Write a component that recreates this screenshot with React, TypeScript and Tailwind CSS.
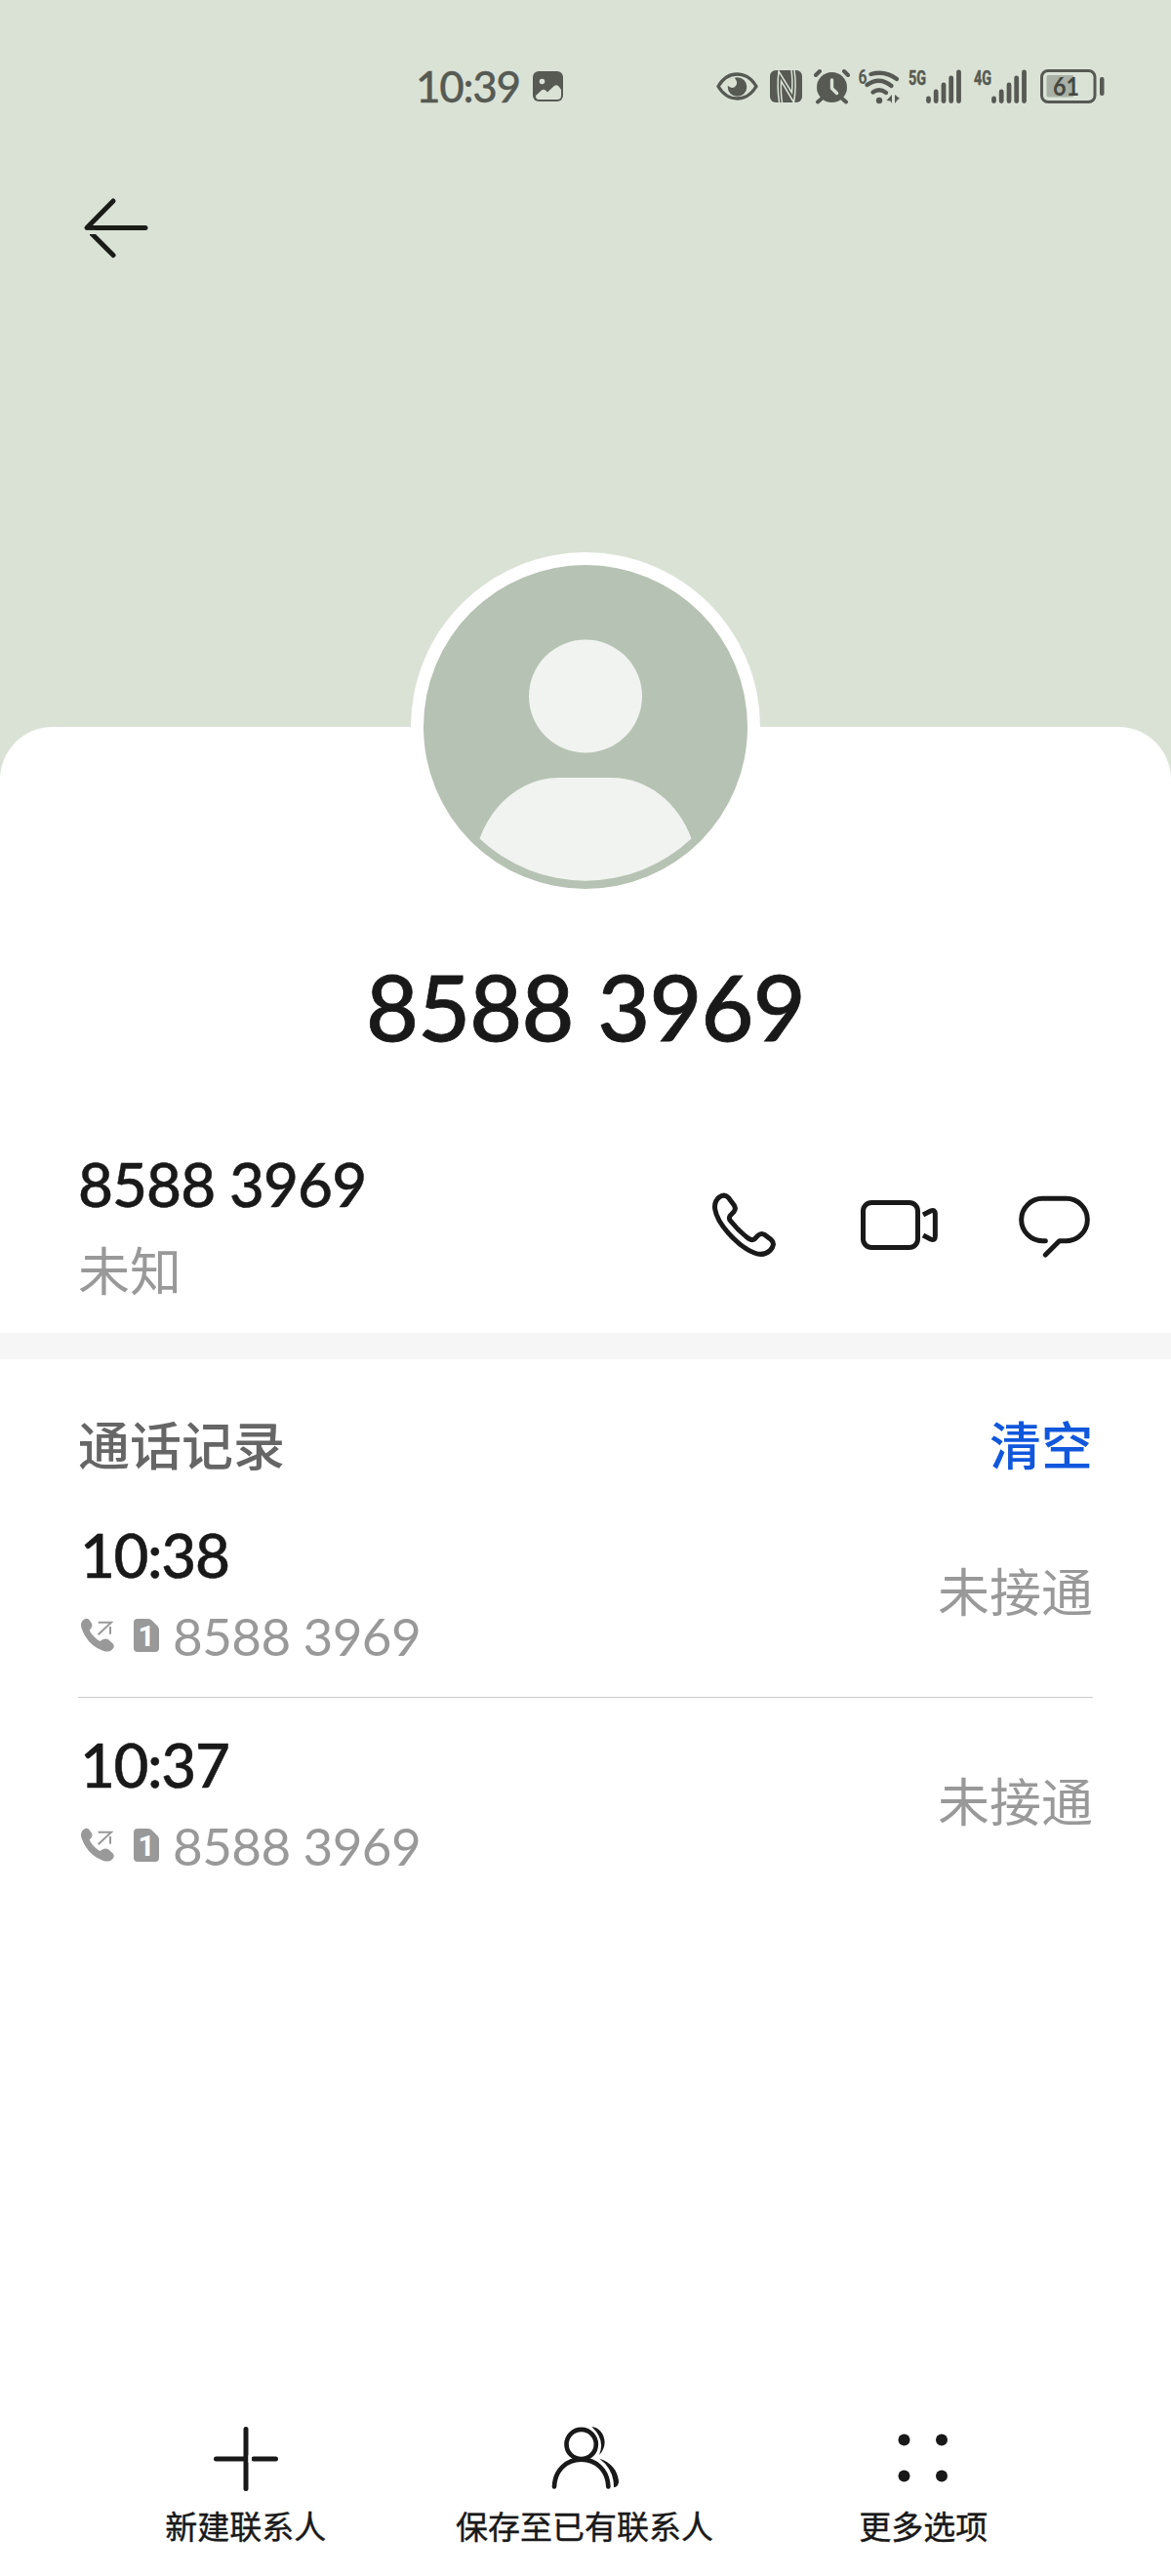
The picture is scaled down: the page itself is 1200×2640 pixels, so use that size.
import React from "react";

interface CallLog {
  time: string;
  number: string;
  status: string;
}

const callLogs: CallLog[] = [
  { time: "10:38", number: "8588 3969", status: "未接通" },
  { time: "10:37", number: "8588 3969", status: "未接通" },
];

function StatusBar() {
  return (
    <div className="flex h-[38px] items-start pl-[426px] text-[#565a53]">
      <span className="w-[120px] font-['Lato'] text-[44px] leading-[37px] tracking-[-1.3px] font-medium [-webkit-text-stroke:0.3px]">
        10:39
      </span>
      <svg className="w-[31px] h-[38px]" viewBox="0 0 31 38">
        <rect y="3" width="31" height="31" rx="6" fill="currentColor" />
        <circle cx="9.500" cy="13.500" r="2.800" fill="#dae2d6" />
        <path
          d="M3 28l6-5.500q2-1.500 4 0l2 2 7-6.500q3-2 5 1l2 3v6q0 4-4 4H6q-3 0-3-4z"
          fill="#dae2d6"
        />
      </svg>

      {/* eye comfort */}
      <svg className="ml-[157px] w-[43px] h-[38px]" viewBox="0 0 43 38">
        <path
          d="M2 18.500Q9.500 6 21.500 6T41 18.500Q33.500 31 21.500 31T2 18.500z"
          fill="none"
          stroke="currentColor"
          strokeWidth="3.400"
          strokeLinejoin="round"
        />
        <circle cx="21.500" cy="19" r="9.800" fill="currentColor" />
        <path d="M12 14l6-5q5 5 2 9t-8 0z" fill="#dae2d6" />
      </svg>

      {/* NFC */}
      <svg className="ml-3 w-[33px] h-[38px]" viewBox="0 0 33 38">
        <rect y="2" width="33" height="33" rx="6" fill="currentColor" />
        <path
          d="M9.500 35Q7 18 9 3L22.500 25Q23.500 12 22 2M24.500 35L11.500 13Q11 26 12.500 35M25 2Q27.500 18 24.500 35"
          fill="none"
          stroke="#dae2d6"
          strokeWidth="1.500"
        />
      </svg>

      {/* alarm */}
      <svg className="ml-3 w-[37px] h-[38px]" viewBox="0 0 37 38">
        <circle cx="18.500" cy="19.500" r="15.500" fill="currentColor" />
        <path
          d="M2 7l4-4M35 7l-4-4M8 31l-4 3.500M29 31l4 3.500"
          stroke="currentColor"
          strokeWidth="4"
          strokeLinecap="round"
        />
        <path
          d="M18.500 12v8.500l5 5"
          fill="none"
          stroke="#dae2d6"
          strokeWidth="3.400"
          strokeLinecap="round"
          strokeLinejoin="round"
        />
      </svg>

      {/* wifi */}
      <svg className="ml-2 w-[44px] h-[38px] overflow-visible" viewBox="0 0 44 38">
        <text
          x="0.500"
          y="16"
          fontSize="20"
          fontWeight="700"
          textLength="9"
          lengthAdjust="spacingAndGlyphs"
          fontFamily="Roboto, sans-serif"
          fill="currentColor"
        >
          6
        </text>
        <g
          fill="none"
          stroke="currentColor"
          strokeWidth="4.400"
          strokeLinecap="round"
        >
          <path d="M13.500 6Q28 2 40 11" />
          <path d="M9.500 17Q22 8 34.500 18" />
          <path d="M15.500 24.500Q22 20 29 25" />
        </g>
        <circle cx="22" cy="33" r="3.200" fill="currentColor" />
        <path d="M35 27v9l-1.500-2.500-4-.5zM38 27l5 4-2 1-3 4z" fill="currentColor" />
      </svg>

      <Signal label="5G" className="ml-[7px] w-[55px] h-[38px] overflow-visible" />
      <Signal label="4G" className="ml-[12px] w-[55px] h-[38px] overflow-visible" />

      {/* battery */}
      <svg className="ml-[14px] w-[67px] h-[38px]" viewBox="0 0 67 38">
        <rect
          x="1.500"
          y="2.500"
          width="54.500"
          height="32"
          rx="6.500"
          fill="none"
          stroke="currentColor"
          strokeWidth="3"
        />
        <rect x="6.500" y="7" width="28" height="22.500" rx="2" fill="#a9b0a5" />
        <rect x="61" y="9" width="4.500" height="19" rx="2" fill="currentColor" />
        <text
          x="13"
          y="28"
          fontSize="27"
          fontWeight="700"
          fontFamily="Lato, sans-serif"
          textLength="27"
          lengthAdjust="spacingAndGlyphs"
          fill="#444840"
        >
          61
        </text>
      </svg>
    </div>
  );
}

function Signal({ label, className }: { label: string; className: string }) {
  return (
    <svg className={className} viewBox="0 0 55 38">
      <text
        x="1"
        y="16.500"
        fontSize="20"
        fontWeight="700"
        fontFamily="Roboto, sans-serif"
        textLength="18"
        lengthAdjust="spacingAndGlyphs"
        fill="currentColor"
        stroke="currentColor"
        strokeWidth="0.500"
      >
        {label}
      </text>
      <g stroke="currentColor" strokeWidth="4.800" strokeLinecap="round">
        <path d="M21.500 31v2.500M29.200 24v9.500M37 17v16.500M44.700 10v23.500M52.500 3.800v29.700" />
      </g>
    </svg>
  );
}

function Avatar() {
  return (
    <div className="mx-auto -mt-[179px] size-[358px] rounded-full bg-white p-[13px]">
      <svg className="size-[332px]" viewBox="0 0 332 332">
        <circle cx="166" cy="166" r="166" fill="#b6c2b3" />
        <circle cx="166" cy="134.500" r="58" fill="#f0f3ef" />
        <path
          d="M139 218h54c36 0 68 25 81.500 62.500a158 158 0 0 1-217 0C71 243 103 218 139 218z"
          fill="#f0f3ef"
        />
      </svg>
    </div>
  );
}

function ContactActions() {
  return (
    <div className="flex pt-[37px] text-[#191919]">
      <svg
        className="size-[72px]"
        viewBox="81 90 216 216"
        fill="none"
        stroke="currentColor"
        strokeWidth="15"
        strokeLinejoin="round"
      >
        <path d="M139 112Q126 99 111 111Q95 124 98 147Q103 180 139 221Q181 268 219 282Q248 293 267 275Q286 255 270 241L252 227Q240 219 230 229L220 239Q212 245 202 238Q171 216 146 184Q139 175 145 167L155 157Q164 147 157 136Z" />
      </svg>
      <svg
        className="ml-[81px] w-[84px] h-[72px]"
        viewBox="540 90 252 216"
        fill="none"
        stroke="currentColor"
        strokeWidth="15"
      >
        <rect x="553.500" y="127.500" width="168" height="138" rx="26" />
        <path
          d="M738 165L761 153Q775 147 775 162V231Q775 246 761 240L738 228"
          strokeLinejoin="round"
        />
      </svg>
      <svg
        className="ml-[78px] w-[78px] h-[72px]"
        viewBox="1026 90 234 216"
        fill="none"
        stroke="currentColor"
        strokeWidth="15"
        strokeLinecap="round"
        strokeLinejoin="round"
      >
        <path d="M1114 245H1105A65 65 0 0 1 1105 115H1178A65 65 0 0 1 1178 245H1157L1114 288" />
      </svg>
    </div>
  );
}

function CallLogRow({ log, divider }: { log: CallLog; divider: boolean }) {
  return (
    <div
      className={`flex h-[215px] justify-between border-b ${
        divider ? "border-[#cccccc]" : "border-transparent"
      }`}
    >
      <div className="pt-[38px]">
        <div className="pl-[2px] font-['Lato'] text-[62px] leading-[60px] tracking-[-1.4px] font-medium text-[#191919] [-webkit-text-stroke:0.5px]">
          {log.time}
        </div>
        <div className="mt-[29px] flex h-[50px] text-[#999999]">
          <svg className="mt-[5px] w-[39px] h-[38px]" viewBox="60 681 117 114">
            <path
              d="M80 688Q87 684 94 690L102 701Q106 708 101 715L95 722Q104 741 127 756L136 751Q144 746 152 750L165 761Q173 768 169 776Q159 792 138 786Q101 774 81 739Q68 716 69 703Q71 692 80 688Z"
              fill="currentColor"
            />
            <path
              d="M122 698H162L122 736M159 711V734"
              fill="none"
              stroke="currentColor"
              strokeWidth="6"
            />
          </svg>
          <div className="relative ml-[18px] mt-[7px] h-[34px] w-[26px]">
            <svg className="size-full" viewBox="0 0 26 34">
              <path
                d="M4 0H15Q17 0 18.500 1.500L24.500 7.500Q26 9 26 11V30Q26 34 22 34H4Q0 34 0 30V4Q0 0 4 0Z"
                fill="currentColor"
              />
            </svg>
            <span className="absolute inset-0 text-center font-['Roboto'] text-[30px] leading-[36px] font-bold text-white">
              1
            </span>
          </div>
          <span className="ml-[14px] font-['Lato'] text-[53px] leading-[50px] tracking-[-0.6px]">
            {log.number}
          </span>
        </div>
      </div>
      <div className="pt-[74px] font-['Noto_Sans_CJK_SC'] text-[53px] leading-[60px] text-[#999999]">
        {log.status}
      </div>
    </div>
  );
}

function BottomBar() {
  const label =
    "mt-[8px] font-['Noto_Sans_CJK_SC'] text-[33px] leading-[40px] whitespace-nowrap [-webkit-text-stroke:0.4px]";

  return (
    <div className="mt-auto grid h-[160px] grid-cols-3 pl-[78px] pr-[80px] text-[#191919]">
      <div className="flex flex-col items-center">
        <svg className="size-[80px]" viewBox="0 0 80 80" stroke="currentColor" strokeWidth="5" strokeLinecap="round">
          <path d="M40 9.500V70.500M9.500 40H40M70.500 40H48" />
          <rect x="42.500" y="36" width="3.500" height="8" fill="#fff" stroke="none" />
        </svg>
        <div className={label}>新建联系人</div>
      </div>
      <div className="flex flex-col items-center">
        <svg className="size-[80px]" viewBox="57 61 240 240" fill="none" stroke="currentColor" strokeWidth="14" strokeLinecap="round">
          <circle cx="167" cy="136" r="45.500" />
          <path d="M84 266C86 215 122 183 167 183S248 215 250 266" />
          <path
            d="M199 82C232 84 257 133 222 169Q242 122 199 82ZM223 180C260 190 282 222 282 253Q280 267 267 269Q268 214 223 180Z"
            fill="currentColor"
            stroke="none"
          />
        </svg>
        <div className={label}>保存至已有联系人</div>
      </div>
      <div className="flex flex-col items-center">
        <svg className="size-[80px]" viewBox="0 0 80 80" fill="currentColor">
          <circle cx="20.500" cy="20.500" r="6" />
          <circle cx="59" cy="20.500" r="6" />
          <circle cx="20.500" cy="57.500" r="6" />
          <circle cx="59" cy="57.500" r="6" />
        </svg>
        <div className={label}>更多选项</div>
      </div>
    </div>
  );
}

export default function App() {
  return (
    <div className="flex h-[2640px] w-[1200px] flex-col overflow-hidden bg-[#dae2d6] font-['Lato','Noto_Sans_CJK_SC',sans-serif]">
      <header className="h-[745px] shrink-0 pt-[70px]">
        <StatusBar />
        <button className="ml-[80px] mt-[86px] block">
          <svg
            className="size-[80px]"
            viewBox="0 0 80 80"
            fill="none"
            stroke="#191c17"
            strokeWidth="5"
            strokeLinecap="round"
            strokeLinejoin="round"
          >
            <path d="M36 12L9 39.500H69" />
            <path d="M14.500 46L36 67.500" />
            <path d="M5 41.900h13v4.100H5z" fill="#dae2d6" stroke="none" />
          </svg>
        </button>
      </header>

      <main className="flex flex-1 flex-col rounded-t-[54px] bg-white">
        <Avatar />
        <h1 className="mt-[57px] mb-[2px] text-center font-['Lato'] text-[93px] leading-[100px] tracking-[-0.8px] [word-spacing:2px] font-medium text-[#191919] [-webkit-text-stroke:0.8px]">
          8588 3969
        </h1>

        <section className="flex h-[283px] justify-between px-[80px] pt-[100px]">
          <div>
            <div className="font-['Lato'] text-[62px] leading-[60px] tracking-[-0.9px] font-medium text-[#191919] [-webkit-text-stroke:0.5px]">
              8588 3969
            </div>
            <div className="mt-[27px] font-['Noto_Sans_CJK_SC'] text-[53px] leading-[60px] text-[#999999]">
              未知
            </div>
          </div>
          <ContactActions />
        </section>

        <div className="h-[27px] bg-[#f6f6f6]" />

        <section className="px-[80px] pt-[56px]">
          <div className="mb-[16px] flex justify-between font-['Noto_Sans_CJK_SC'] text-[53px] leading-[60px] font-medium">
            <h2 className="text-[#666666]">通话记录</h2>
            <button className="text-[#1057dc]">清空</button>
          </div>
          {callLogs.map((log, i) => (
            <CallLogRow
              key={log.time}
              log={log}
              divider={i < callLogs.length - 1}
            />
          ))}
        </section>

        <BottomBar />
      </main>
    </div>
  );
}
